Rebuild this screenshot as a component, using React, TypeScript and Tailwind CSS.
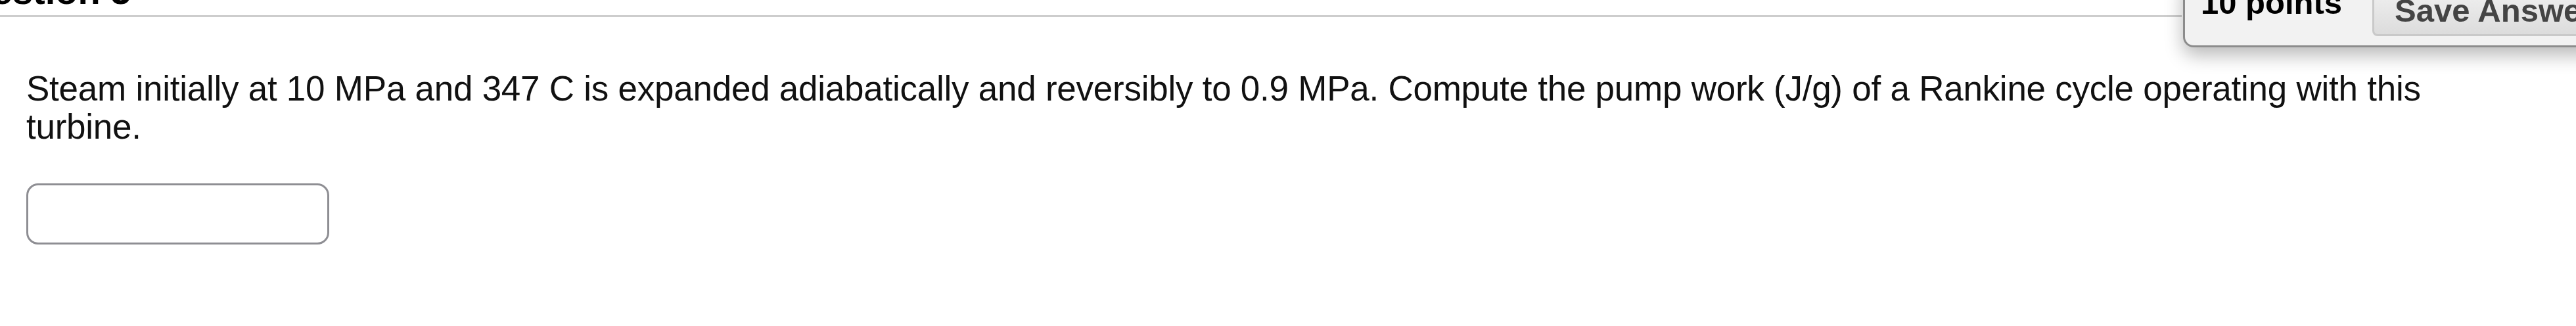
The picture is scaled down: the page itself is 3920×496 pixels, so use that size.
import React from 'react';

const QUESTION =
  'Steam initially at 10 MPa and 347 C is expanded adiabatically and reversibly to 0.9 MPa. Compute the pump work (J/g) of a Rankine cycle operating with this turbine.';

export default function App() {
  return (
    <div className="relative w-[3920px] h-[496px] overflow-hidden bg-white font-['Liberation_Sans',Arial,sans-serif] text-[#111]">
      {/* heading, mostly scrolled out of view */}
      <div className="flex h-[23px] items-end">
        <h2 className="mb-[8px] -ml-[90px] text-[56px] leading-[56px] font-bold text-black whitespace-nowrap">
          Question 5
        </h2>
      </div>
      <div className="h-[3px] bg-[#cdcdcd] mr-[600px]" />

      {/* points / save panel */}
      <div className="absolute left-[3322px] top-[-40px] w-[700px] h-[112px] bg-[#f2f2f2] border-[3px] border-[#8c8c8c] rounded-[16px] shadow-[0_12px_28px_rgba(0,0,0,0.28)] flex items-start">
        <span className="mt-[13px] ml-[24px] text-[49px] leading-[56px] font-bold text-black whitespace-nowrap">
          10 points
        </span>
        <button className="shrink-0 ml-[46px] h-[92px] w-[420px] pt-[13px] pl-[31px] text-left whitespace-nowrap border-[3px] border-[#c9c9c9] rounded-[8px] bg-gradient-to-b from-[#f6f6f6] to-[#dcdcdc] text-[49px] leading-[56px] font-bold text-[#444]">
          Save Answer
        </button>
      </div>

      <div className="pl-[40px] pt-[80px]">
        <p className="w-[3700px] text-[53px] leading-[58px] tracking-[-0.25px]">{QUESTION}</p>
        <input
          type="text"
          className="block mt-[57px] w-[461px] h-[93px] border-[3px] border-[#8e8e93] rounded-[18px] bg-white outline-none"
        />
      </div>
    </div>
  );
}
